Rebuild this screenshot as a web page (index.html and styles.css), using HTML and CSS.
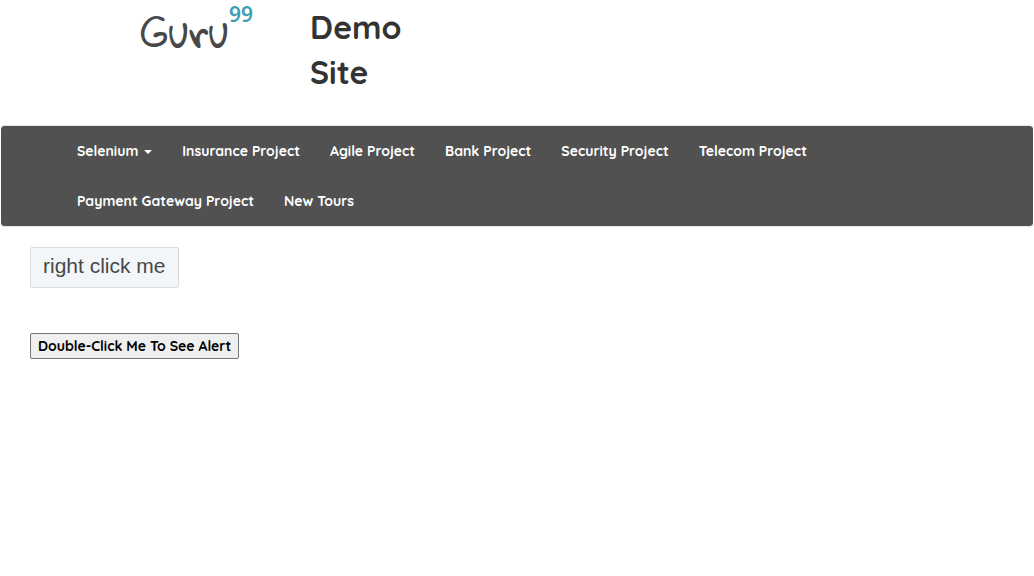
FILE: index.html
```html
<!DOCTYPE html>
<html lang="en">
<head>
<meta charset="utf-8">
<meta name="viewport" content="width=device-width, initial-scale=1">
<title>Guru99 Demo Site</title>
<link rel="stylesheet" href="styles.css">
</head>
<body>
<header class="site-header">
  <svg class="logo" viewBox="0 0 130 80" role="img" aria-label="Guru99">
    <text class="logo-name" x="9" y="48">Guru</text>
    <text class="logo-number" x="97" y="22">99</text>
  </svg>
  <h2 class="site-title">Demo Site</h2>
</header>
<nav class="navbar">
  <ul class="nav-list">
    <li><a class="nav-link" href="#">Selenium <span class="caret"></span></a></li>
    <li><a class="nav-link" href="#">Insurance Project</a></li>
    <li><a class="nav-link" href="#">Agile Project</a></li>
    <li><a class="nav-link" href="#">Bank Project</a></li>
    <li><a class="nav-link" href="#">Security Project</a></li>
    <li><a class="nav-link" href="#">Telecom Project</a></li>
    <li><a class="nav-link" href="#">Payment Gateway Project</a></li>
    <li><a class="nav-link" href="#">New Tours</a></li>
  </ul>
</nav>
<main class="content">
  <button class="context-button" type="button">right click me</button>
  <button class="alert-button" type="button">Double-Click Me To See Alert</button>
</main>
</body>
</html>
```
FILE: styles.css
```css
* {
  box-sizing: border-box;
}

body {
  margin: 0;
  background: #fff;
  color: #333;
  font-family: Quicksand, Lato, sans-serif;
  font-size: 14px;
}

.site-header {
  display: flex;
  align-items: flex-start;
  gap: 48px;
  padding: 0 30px 30px 132px;
}

.logo {
  flex: none;
  width: 130px;
  height: 80px;
  overflow: visible;
}

.logo-name {
  fill: #484848;
  font: 40px "Gloria Hallelujah", Lato, sans-serif;
}

.logo-number {
  fill: #409fb4;
  font: 600 21px "Noto Sans", sans-serif;
}

.site-title {
  width: min-content;
  margin: 5px 0 0;
  font-size: 32px;
  font-weight: 700;
  line-height: 45px;
}

.navbar {
  margin: 0 1px;
  padding: 0 61px;
  border: 1px solid #e2e8e8;
  border-width: 1px 0;
  border-radius: 4px;
  background: #515151;
}

.nav-list {
  display: flex;
  flex-wrap: wrap;
  margin: 0;
  padding: 0;
  list-style: none;
}

.nav-link {
  display: block;
  padding: 15px;
  color: #fff;
  font-weight: 700;
  line-height: 20px;
  text-decoration: none;
}

.caret {
  display: inline-block;
  margin-left: 2px;
  border: 4px solid transparent;
  border-top-color: #fff;
  border-bottom: 0;
  vertical-align: middle;
}

.content {
  display: flex;
  flex-direction: column;
  align-items: flex-start;
  gap: 45px;
  padding: 20px 30px;
}

.context-button {
  padding: 4px 12px 8px;
  border: 1px solid #d6dde0;
  border-radius: 2px;
  background: #f2f6f8;
  color: #484848;
  font: 21px/27px "Liberation Sans", Arial, sans-serif;
}

.alert-button {
  padding: 2px 7px;
  border: 1px solid #767676;
  border-radius: 2px;
  background: #efefef;
  color: #000;
  font-family: inherit;
  font-size: 14px;
  font-weight: 700;
  line-height: 20px;
}
```
